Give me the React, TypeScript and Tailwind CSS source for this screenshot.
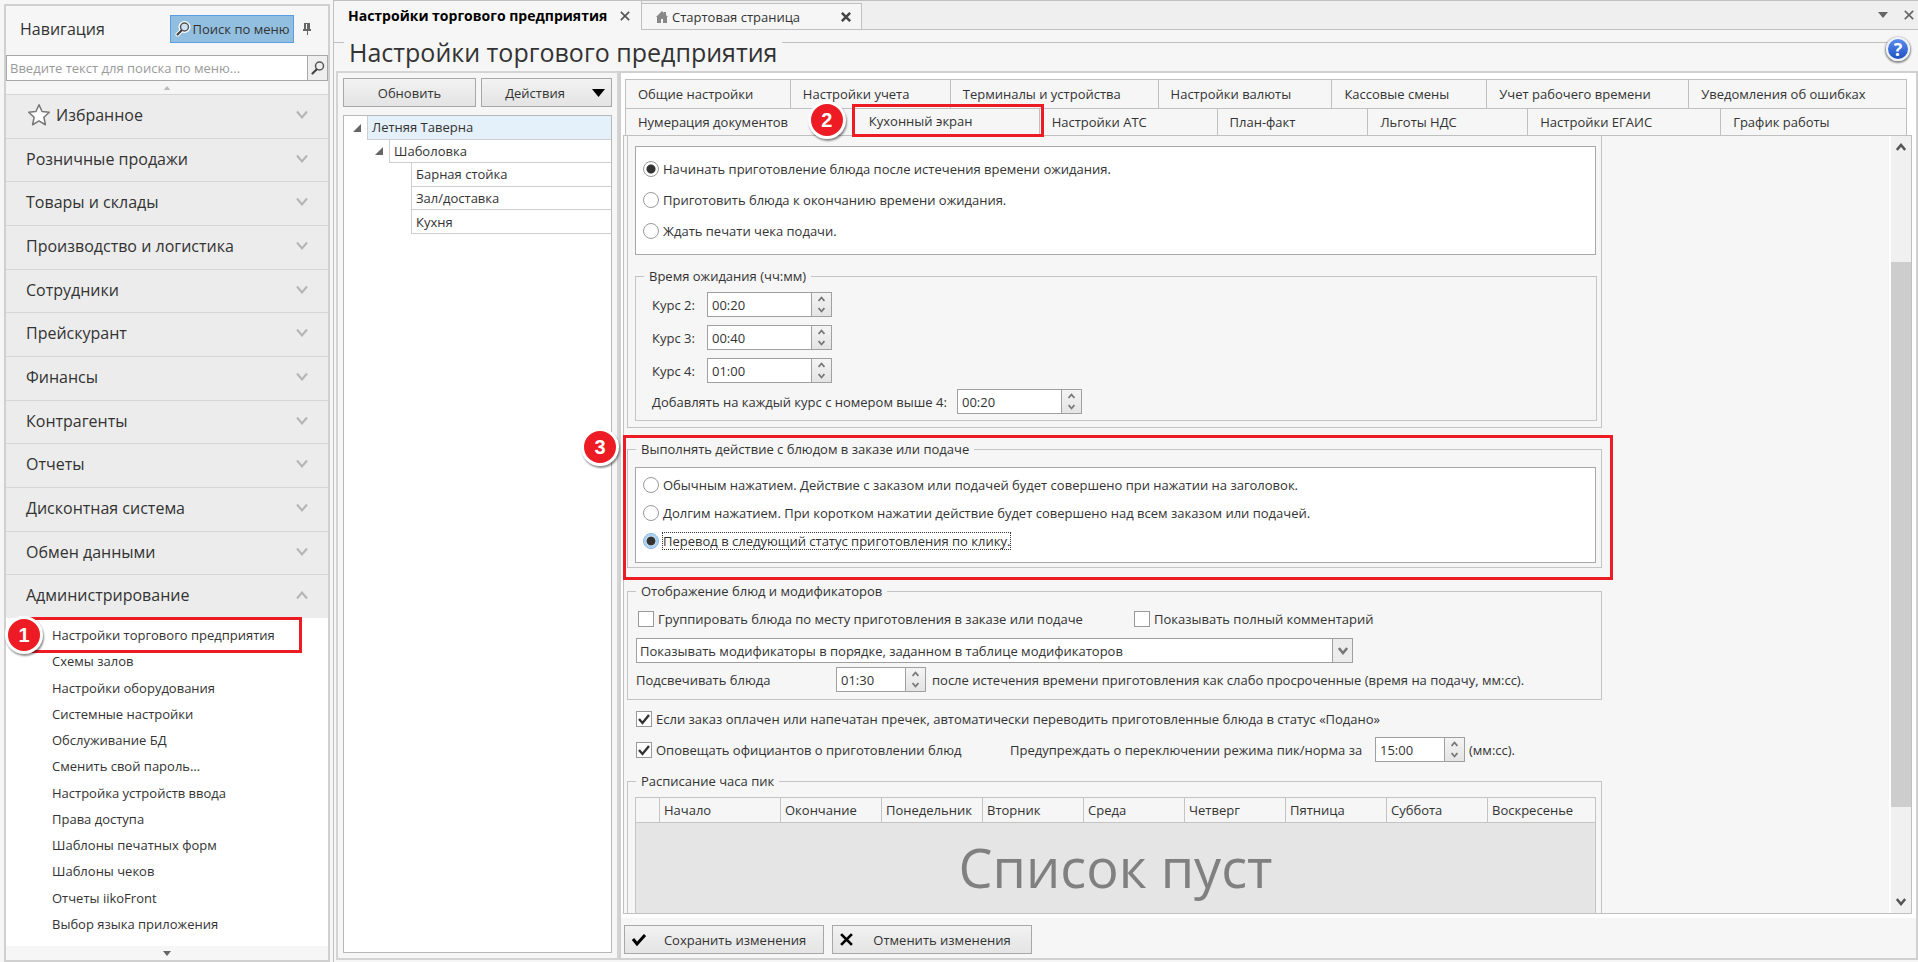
import { useState } from "react";

const sections = [
  "Избранное",
  "Розничные продажи",
  "Товары и склады",
  "Производство и логистика",
  "Сотрудники",
  "Прейскурант",
  "Финансы",
  "Контрагенты",
  "Отчеты",
  "Дисконтная система",
  "Обмен данными",
  "Администрирование",
];

const adminItems = [
  "Настройки торгового предприятия",
  "Схемы залов",
  "Настройки оборудования",
  "Системные настройки",
  "Обслуживание БД",
  "Сменить свой пароль…",
  "Настройка устройств ввода",
  "Права доступа",
  "Шаблоны печатных форм",
  "Шаблоны чеков",
  "Отчеты iikoFront",
  "Выбор языка приложения",
];

const topTabs = [
  "Общие настройки",
  "Настройки учета",
  "Терминалы и устройства",
  "Настройки валюты",
  "Кассовые смены",
  "Учет рабочего времени",
  "Уведомления об ошибках",
];

const bottomTabs = [
  "Нумерация документов",
  "Кухонный экран",
  "Настройки АТС",
  "План-факт",
  "Льготы НДС",
  "Настройки ЕГАИС",
  "График работы",
];

const columns = [
  "Окончание",
  "Понедельник",
  "Вторник",
  "Среда",
  "Четверг",
  "Пятница",
  "Суббота",
];

type ChevronProps = { up?: boolean; className?: string; stroke?: number };

const Chevron = ({ up, className = "", stroke = 2 }: ChevronProps) => (
  <svg viewBox="0 0 12 9" className={className} fill="none" stroke="currentColor" strokeWidth={stroke}>
    <path d={up ? "M1 8 6 2l5 6" : "M1 1l5 6 5-6"} />
  </svg>
);

const Triangle = ({ up, className = "" }: { up?: boolean; className?: string }) => (
  <svg viewBox="0 0 10 6" className={className} fill="currentColor">
    <path d={up ? "M0 6 5 0l5 6z" : "M0 0h10L5 6z"} />
  </svg>
);

const Cross = ({ className = "", stroke = 2 }: { className?: string; stroke?: number }) => (
  <svg viewBox="0 0 12 12" className={className} fill="none" stroke="currentColor" strokeWidth={stroke}>
    <path d="M1 1l10 10M11 1 1 11" />
  </svg>
);

const Magnifier = ({ halo }: { halo?: boolean }) => (
  <svg viewBox="0 0 16 16" className="h-4 w-4 shrink-0" fill="none">
    {halo && (
      <g stroke="#fff" strokeWidth="4" strokeLinecap="round">
        <circle cx="9.5" cy="6" r="4" />
        <path d="M6.5 9.5 2.5 13.5" />
      </g>
    )}
    <circle cx="9.5" cy="6" r="4" fill={halo ? "#cfe3f3" : "none"} stroke="#555" strokeWidth="1.5" />
    <path d="M6.5 9.5 2.5 13.5" stroke="#444" strokeWidth="2.2" strokeLinecap="round" />
  </svg>
);

const Marker = ({ n, className }: { n: number; className: string }) => (
  <span
    className={`absolute z-20 flex h-[38px] w-[38px] items-center justify-center rounded-full border-[3px] border-white bg-[#ed1c24] font-['Liberation_Sans',sans-serif] text-[20px] font-bold text-white shadow-[1px_2px_2px_rgba(0,0,0,0.45)] ${className}`}
  >
    {n}
  </span>
);

type RadioProps = { name: string; label: string; checked?: boolean; focused?: boolean };

const Radio = ({ name, label, checked, focused }: RadioProps) => (
  <label className="flex h-5 items-center gap-1">
    <input
      type="radio"
      name={name}
      defaultChecked={checked}
      className={`h-4 w-4 shrink-0 appearance-none rounded-full border bg-white checked:bg-[radial-gradient(circle,#333_0_4px,transparent_5px)] ${
        focused ? "border-[#7fb4e4] shadow-[inset_0_0_0_2px_#a9d0f2]" : "border-[#9a9a9a]"
      }`}
    />
    <span className={focused ? "leading-4 outline-1 outline-dotted outline-[#333]" : ""}>{label}</span>
  </label>
);

const Checkbox = ({ label, checked }: { label: string; checked?: boolean }) => (
  <label className="flex items-center gap-1">
    <span className="relative flex h-4 w-4 shrink-0">
      <input
        type="checkbox"
        defaultChecked={checked}
        className="peer h-4 w-4 appearance-none border border-[#999] bg-white"
      />
      <svg
        viewBox="0 0 16 16"
        className="pointer-events-none absolute inset-0 hidden h-4 w-4 peer-checked:block"
        fill="none"
        stroke="#333"
        strokeWidth="2.4"
      >
        <path d="M3 8l3.5 4L13 4" />
      </svg>
    </span>
    <span>{label}</span>
  </label>
);

type TimeFieldProps = { value: string; label: string; id: string; className: string };

const TimeField = ({ value, label, id, className }: TimeFieldProps) => (
  <span className={`flex h-[25px] border border-[#a0a0a0] bg-white ${className}`}>
    <input id={id} aria-label={label} defaultValue={value} className="w-full min-w-0 flex-1 bg-white px-1" />
    <span className="flex w-5 flex-col border-l border-[#a0a0a0] bg-gradient-to-b from-[#f4f4f4] to-[#e4e4e4] text-[#777]">
      <button aria-label="Больше" className="flex flex-1 items-center justify-center">
        <Chevron up stroke={3} className="h-[6px] w-[7px]" />
      </button>
      <button aria-label="Меньше" className="flex flex-1 items-center justify-center">
        <Chevron stroke={3} className="h-[6px] w-[7px]" />
      </button>
    </span>
  </span>
);

const Sidebar = () => (
  <nav className="mt-1 flex w-[326px] shrink-0 flex-col border-2 border-[#d0d0d0] bg-[#f6f6f6]">
    <div className="flex h-[49px] items-center pb-[3px] pl-3 pr-4">
      <h2 className="flex-1 pl-[2px] text-[16px]">Навигация</h2>
      <button className="flex h-7 w-[124px] items-center justify-center gap-[2px] whitespace-nowrap border border-[#5a9de0] bg-[#92bfe0]">
        <Magnifier halo />
        Поиск по меню
      </button>
      <button aria-label="Закрепить" className="ml-2 text-[#666]">
        <svg viewBox="0 0 10 12" className="h-3 w-[10px]" fill="currentColor">
          <path d="M2 0h6v6h1v2H6v4H5V8H1V6h1zm2 1v5h1V1z" />
        </svg>
      </button>
    </div>
    <div className="flex h-[26px] border border-[#a8a8a8] bg-white">
      <input
        aria-label="Поиск по меню"
        placeholder="Введите текст для поиска по меню..."
        className="min-w-0 flex-1 px-[3px] placeholder:text-[#9a9a9a]"
      />
      <button aria-label="Найти" className="flex w-5 items-center justify-center border-l border-[#a8a8a8] bg-[#efefef]">
        <Magnifier />
      </button>
    </div>
    <div className="flex h-[13px] items-center justify-center text-[#bbb]">
      <Triangle up className="h-1 w-2" />
    </div>
    <ul className="flex h-[524px] flex-col bg-[#ececec]">
      {sections.map((name, i) => (
        <li key={name} className="flex flex-1 border-t border-[#d6d6d6]">
          <button className="flex flex-1 items-center pb-[3px] pl-5 pr-5 text-[16px]">
            {i === 0 && (
              <svg
                viewBox="0 0 24 24"
                className="mr-1 h-[26px] w-[26px]"
                fill="#fff"
                stroke="#777"
                strokeWidth="1.4"
                strokeLinejoin="round"
              >
                <path d="M12 2.5l2.8 6.3 6.700.7-5 4.6 1.400 6.900L12 17.500 6.100 21l1.400-6.900-5-4.600 6.700-.7z" />
              </svg>
            )}
            <span className="flex-1 text-left">{name}</span>
            <Chevron up={i === sections.length - 1} className="h-[10px] w-3 text-[#b4b4b4]" />
          </button>
        </li>
      ))}
    </ul>
    <div className="flex-1 bg-white pt-1">
      <ul className="flex h-[315px] flex-col">
        {adminItems.map((name, i) => (
          <li key={name} className="relative flex flex-1 items-center pl-[46px]">
            <a href="#">{name}</a>
            {i === 0 && (
              <>
                <span className="pointer-events-none absolute -top-[5px] left-[22px] h-9 w-[274px] border-[3px] border-[#ed1c24]" />
                <Marker n={1} className="-left-px -top-[6px]" />
              </>
            )}
          </li>
        ))}
      </ul>
    </div>
    <div className="flex h-[14px] shrink-0 items-center justify-center text-[#666]">
      <Triangle className="h-[5px] w-2" />
    </div>
  </nav>
);

const TreeArrow = ({ className }: { className: string }) => (
  <span className={`flex shrink-0 items-center justify-end pr-[6px] ${className}`}>
    <svg viewBox="0 0 8 8" className="h-2 w-2" fill="#666">
      <path d="M8 0v8H0z" />
    </svg>
  </span>
);

const TreeCell = ({ children, className = "" }: { children: string; className?: string }) => (
  <button className={`flex flex-1 items-center border-b border-l border-[#cfcfcf] pl-1 ${className}`}>
    {children}
  </button>
);

const Tree = () => (
  <section className="flex w-[283px] shrink-0 flex-col border-2 border-[#d4d4d4] p-[5px]">
    <div className="flex gap-[5px]">
      <button className="h-[29px] w-[133px] border border-[#a8a8a8] bg-gradient-to-b from-[#f2f2f2] to-[#e4e4e4]">
        Обновить
      </button>
      <button className="flex h-[29px] flex-1 items-center border border-[#a8a8a8] bg-gradient-to-b from-[#f2f2f2] to-[#e4e4e4] pr-[6px]">
        <span className="flex-1 pr-1">Действия</span>
        <Triangle className="h-2 w-[13px] text-black" />
      </button>
    </div>
    <div className="mt-2 flex-1 border border-[#b8b8b8] bg-white">
      <ul className="flex h-[118px] flex-col">
        <li className="flex flex-1">
          <TreeArrow className="w-[23px]" />
          <TreeCell className="bg-[#e4f0fa]">Летняя Таверна</TreeCell>
        </li>
        <li className="flex flex-1">
          <TreeArrow className="w-[45px]" />
          <TreeCell>Шаболовка</TreeCell>
        </li>
        {["Барная стойка", "Зал/доставка", "Кухня"].map((name) => (
          <li key={name} className="flex flex-1 pl-[67px]">
            <TreeCell>{name}</TreeCell>
          </li>
        ))}
      </ul>
    </div>
  </section>
);

const WaitTime = () => (
  <fieldset className="ml-[7px] mr-1 mt-[11px] h-[155px] border border-[#c4c4c4] pl-4">
    <legend className="-ml-2 px-[5px] leading-5">Время ожидания (чч:мм)</legend>
    {[
      ["2", "00:20"],
      ["3", "00:40"],
      ["4", "01:00"],
    ].map(([n, time]) => (
      <div key={n} className="mt-[6px] flex items-center pb-[2px]">
        <label htmlFor={`course-${n}`} className="w-[55px]">
          Курс {n}:
        </label>
        <TimeField id={`course-${n}`} label={`Курс ${n}`} value={time} className="w-[125px]" />
      </div>
    ))}
    <div className="mt-1 flex items-center gap-2">
      <label htmlFor="course-extra" className="w-[297px] whitespace-nowrap">
        Добавлять на каждый курс с номером выше 4:
      </label>
      <TimeField id="course-extra" label="Следующие курсы" value="00:20" className="w-[125px]" />
    </div>
  </fieldset>
);

const KitchenScreen = () => (
  <div className="w-full max-w-[978px] pl-[3px]">
    {/* the list is scrolled down, so the first caption is hidden under the tabs */}
    <fieldset className="-mt-[19px] h-[311px] border border-[#c4c4c4]">
      <legend className="ml-2 px-[5px] leading-5">Приготовление курсов блюд</legend>
      <div className="ml-[7px] mr-[5px] mt-[9px] flex h-[109px] flex-col justify-center gap-[11px] border border-[#a8a8a8] bg-white pb-px pl-[7px]">
        <Radio name="course" label="Начинать приготовление блюда после истечения времени ожидания." checked />
        <Radio name="course" label="Приготовить блюда к окончанию времени ожидания." />
        <Radio name="course" label="Ждать печати чека подачи." />
      </div>
      <WaitTime />
    </fieldset>

    <fieldset className="mt-[11px] h-[129px] border border-[#c4c4c4]">
      <legend className="ml-2 px-[5px] leading-5">Выполнять действие с блюдом в заказе или подаче</legend>
      <div className="ml-[7px] mr-[5px] mt-2 flex h-[96px] flex-col justify-center gap-2 border border-[#a8a8a8] bg-white pb-1 pl-[7px]">
        <Radio
          name="action"
          label="Обычным нажатием. Действие с заказом или подачей будет совершено при нажатии на заголовок."
        />
        <Radio
          name="action"
          label="Долгим нажатием. При коротком нажатии действие будет совершено над всем заказом или подачей."
        />
        <Radio name="action" label="Перевод в следующий статус приготовления по клику." checked focused />
      </div>
    </fieldset>

    <fieldset className="mt-[13px] h-[119px] border border-[#c4c4c4] pl-2">
      <legend className="px-[5px] leading-5">Отображение блюд и модификаторов</legend>
      <div className="mt-2 flex pl-[2px]">
        <div className="w-[496px]">
          <Checkbox label="Группировать блюда по месту приготовления в заказе или подаче" />
        </div>
        <Checkbox label="Показывать полный комментарий" />
      </div>
      <div className="relative mt-[9px] w-[717px]">
        <select
          aria-label="Порядок модификаторов"
          className="h-[25px] w-full appearance-none border border-[#a0a0a0] bg-white pl-[3px]"
        >
          <option>Показывать модификаторы в порядке, заданном в таблице модификаторов</option>
        </select>
        <span className="pointer-events-none absolute inset-y-0 right-0 flex w-[21px] items-center justify-center border border-[#a0a0a0] bg-[#ececec] text-[#777]">
          <Chevron stroke={3} className="h-2 w-[10px]" />
        </span>
      </div>
      <div className="mt-1 flex items-center">
        <label htmlFor="highlight" className="w-[200px]">
          Подсвечивать блюда
        </label>
        <TimeField id="highlight" label="Подсвечивать блюда" value="01:30" className="w-[90px]" />
        <span className="ml-[6px]">
          после истечения времени приготовления как слабо просроченные (время на подачу, мм:сс).
        </span>
      </div>
    </fieldset>

    <div className="mt-[9px] pl-[9px]">
      <Checkbox
        label="Если заказ оплачен или напечатан пречек, автоматически переводить приготовленные блюда в статус «Подано»"
        checked
      />
      <div className="mt-2 flex items-center">
        <div className="w-[374px]">
          <Checkbox label="Оповещать официантов о приготовлении блюд" checked />
        </div>
        <label htmlFor="peak" className="w-[365px]">
          Предупреждать о переключении режима пик/норма за
        </label>
        <TimeField id="peak" label="Предупреждать за" value="15:00" className="w-[90px]" />
        <span className="ml-1">(мм:сс).</span>
      </div>
    </div>

    <fieldset className="mt-[9px] border border-[#c4c4c4] pl-[7px] pr-[5px]">
      <legend className="ml-px px-[5px] leading-5">Расписание часа пик</legend>
      <table className="mt-[6px] w-full table-fixed border-collapse border border-[#c4c4c4]">
        <thead>
          <tr className="h-[25px] text-left">
            <th aria-label="Выбор" className="w-6 border border-[#c4c4c4]" />
            <th className="w-[121px] border border-[#c4c4c4] px-1 font-normal">Начало</th>
            {columns.map((name) => (
              <th key={name} className="w-[101px] border border-[#c4c4c4] px-1 font-normal">
                {name}
              </th>
            ))}
            <th className="border border-[#c4c4c4] px-1 font-normal">Воскресенье</th>
          </tr>
        </thead>
        <tbody>
          <tr className="h-[160px]">
            <td colSpan={10} className="bg-[#e5e5e5] pt-3 text-center align-top text-[54px] leading-[64px] text-[#808080]">
              Список пуст
            </td>
          </tr>
        </tbody>
      </table>
    </fieldset>
  </div>
);

type SettingsTabsProps = { active: string; onSelect: (name: string) => void };

const SettingsTabs = ({ active, onSelect }: SettingsTabsProps) => (
  <div role="tablist" className="ml-[2px] mr-[5px] mt-[6px] border-l border-t border-[#c0c0c0] bg-[#f6f6f6]">
    <div className="grid h-[29px] grid-cols-[165fr_160fr_208fr_174fr_155fr_202fr_218fr]">
      {topTabs.map((name) => (
        <button
          key={name}
          role="tab"
          aria-selected={active === name}
          onClick={() => onSelect(name)}
          className="whitespace-nowrap border-b border-r border-[#c0c0c0] pb-px pl-3 text-left"
        >
          {name}
        </button>
      ))}
    </div>
    <div className="grid h-[26px] grid-cols-[227fr_187fr_178fr_151fr_160fr_193fr_186fr]">
      {bottomTabs.map((name, i) => (
        <div key={name} className="relative flex">
          <button
            role="tab"
            aria-selected={active === name}
            onClick={() => onSelect(name)}
            className={`flex-1 whitespace-nowrap text-left ${active === name ? "pb-[3px] pl-4" : "pb-px pl-3"} ${
              i === 0 ? "" : "border-r border-[#c0c0c0]"
            }`}
          >
            {name}
          </button>
          {name === "Кухонный экран" && (
            <>
              <span className="pointer-events-none absolute -bottom-[2px] -left-px -right-1 -top-[5px] z-10 border-[3px] border-[#ed1c24]" />
              <Marker n={2} className="-left-[45px] -top-2" />
            </>
          )}
        </div>
      ))}
    </div>
  </div>
);

const App = () => {
  const [tab, setTab] = useState("Кухонный экран");

  return (
    <div className="flex h-screen min-h-[700px] bg-[#f6f6f6] pl-1 font-['Open_Sans','Noto_Sans',sans-serif] text-[13px] leading-5 text-[#333]">
      <Sidebar />

      <main className="ml-[3px] flex min-w-0 flex-1 flex-col border-l border-t border-[#c0c0c0]">
        <div className="flex h-[29px] shrink-0 bg-[#efefef]">
          <div className="flex w-[308px] items-center border-r border-[#c0c0c0] bg-[#f6f6f6] pl-[14px] text-[14px] font-bold text-black">
            <span className="flex-1 whitespace-nowrap">Настройки торгового предприятия</span>
            <button aria-label="Закрыть вкладку" className="mr-[11px] text-[#555]">
              <Cross className="h-[10px] w-[10px]" />
            </button>
          </div>
          <div className="flex flex-1 items-end border-b border-[#c0c0c0]">
            <div className="flex h-[26px] w-[220px] items-center border-r border-t border-[#c0c0c0] bg-[#f6f6f6] pl-[14px]">
              <svg viewBox="0 0 12 12" className="h-3 w-3" fill="#888">
                <path d="M6 0 0 6h1v6h4V8h2v4h4V6h1L10 4V1H8v1z" />
              </svg>
              <span className="ml-1 flex-1">Стартовая страница</span>
              <button aria-label="Закрыть вкладку" className="mr-[10px] text-[#444]">
                <Cross className="h-[10px] w-[10px]" stroke={3} />
              </button>
            </div>
          </div>
          <div className="flex items-center gap-4 border-b border-[#c0c0c0] pr-1 text-[#666]">
            <button aria-label="Список вкладок">
              <Triangle className="h-[6px] w-[10px]" />
            </button>
            <button aria-label="Закрыть">
              <Cross className="h-[10px] w-[10px]" />
            </button>
          </div>
        </div>

        <header className="flex h-[41px] shrink-0 items-center pt-[2px]">
          <span className="mb-[18px] w-[10px] border-t border-[#c0c0c0]" />
          <h1 className="mx-[5px] text-[25px] leading-8">Настройки торгового предприятия</h1>
          <span className="mb-[18px] flex-1 border-t border-[#c0c0c0]" />
          <button
            aria-label="Справка"
            className="-ml-1 mb-[5px] mr-2 flex h-6 w-6 items-center justify-center rounded-full border-2 border-[#eef2fb] bg-gradient-to-b from-[#5b8df0] to-[#2050c0] text-[18px] font-bold leading-none text-white shadow-[0_1px_2px_1px_#888]"
          >
            ?
          </button>
        </header>

        <div className="flex min-h-0 flex-1 pb-[2px] pl-[2px]">
          <Tree />

          <section className="relative flex min-w-0 flex-1 flex-col border-2 border-[#d0d0d0]">
            <div className="flex min-h-0 flex-1 flex-col bg-white pb-1 pl-[2px] pr-1">
              <SettingsTabs active={tab} onSelect={setTab} />
              <div className="flex min-h-0 flex-1 border border-[#c0c0c0] bg-[#f6f6f6]">
                <div className="min-w-0 flex-1 overflow-hidden">
                  <KitchenScreen />
                </div>
                <div className="flex w-[22px] shrink-0 flex-col items-center border-l-2 border-white bg-[#f0f0f0] text-[#555]">
                  <button aria-label="Вверх" className="flex h-[22px] items-center">
                    <Chevron up stroke={3} className="h-2 w-[10px]" />
                  </button>
                  <span className="mb-[84px] mt-[104px] w-full flex-1 bg-[#cdcdcd]" />
                  <button aria-label="Вниз" className="flex h-[22px] items-center">
                    <Chevron stroke={3} className="h-2 w-[10px]" />
                  </button>
                </div>
              </div>
            </div>
            <span className="pointer-events-none absolute left-[2px] top-[362px] z-10 h-[145px] w-[990px] border-[3px] border-[#ed1c24]" />
            <Marker n={3} className="-left-[40px] top-[355px]" />

            <footer className="flex h-10 shrink-0 gap-2 px-[3px] pt-[7px]">
              <button className="flex h-[29px] w-[200px] items-center border border-[#a8a8a8] bg-gradient-to-b from-[#f2f2f2] to-[#e4e4e4] pl-[6px]">
                <svg viewBox="0 0 16 14" className="h-[14px] w-4" fill="none" stroke="#000" strokeWidth="3">
                  <path d="M2 6l4 5 8-9" />
                </svg>
                <span className="flex-1">Сохранить изменения</span>
              </button>
              <button className="flex h-[29px] w-[200px] items-center border border-[#a8a8a8] bg-gradient-to-b from-[#f2f2f2] to-[#e4e4e4] pl-[7px]">
                <Cross className="h-[13px] w-[13px] text-black" stroke={2.5} />
                <span className="flex-1">Отменить изменения</span>
              </button>
            </footer>
          </section>
        </div>
      </main>
    </div>
  );
};

export default App;
